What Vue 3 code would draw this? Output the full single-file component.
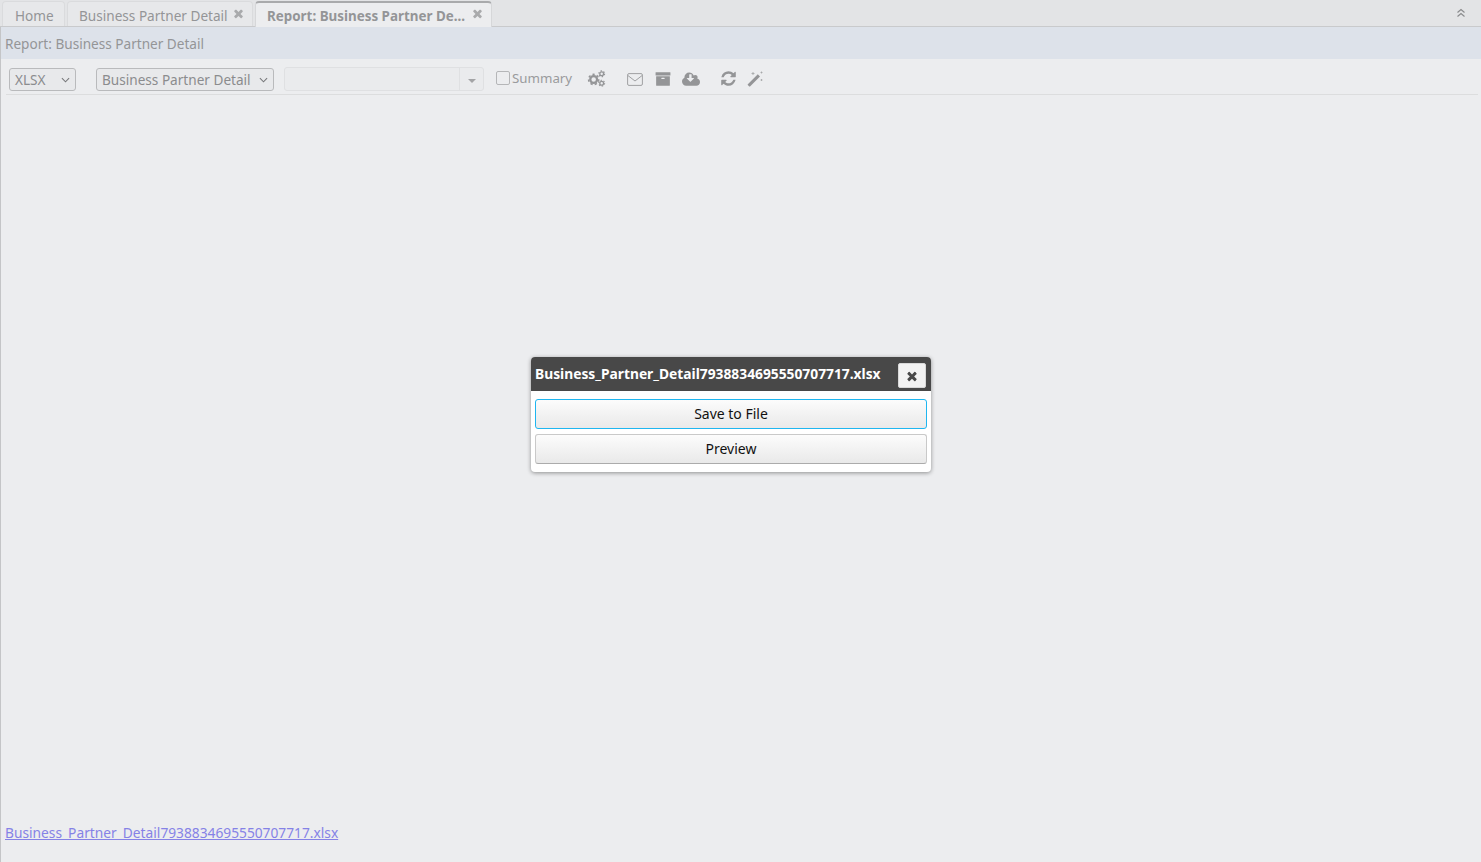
<script setup>
const tabs = [
	{label: 'Home', closable: false},
	{label: 'Business Partner Detail', closable: true},
	{label: 'Report: Business Partner De...', closable: true, active: true},
];
const fileName = 'Business_Partner_Detail7938834695550707717.xlsx';
const closePath = 'M1490 1322q0 40-28 68l-136 136q-28 28-68 28t-68-28l-294-294-294 294q-28 28-68 28t-68-28l-136-136q-28-28-28-68t28-68l294-294-294-294q-28-28-28-68t28-68l136-136q28-28 68-28t68 28l294 294 294-294q28-28 68-28t68 28l136 136q28 28 28 68t-28 68l-294 294 294 294q28 28 28 68z';
</script>

<template>
	<div class="desktop">
		<div class="tabbar">
			<div v-for="tab in tabs" :key="tab.label" class="tab" :class="{active: tab.active, closable: tab.closable}">
				<span class="tab-label">{{ tab.label }}</span>
				<svg v-if="tab.closable" class="tab-close" viewBox="0 0 1792 1792"><path :d="closePath" /></svg>
			</div>
			<svg class="collapse" viewBox="0 0 10 10"><path d="M1.5 4.5 5 1.5l3.5 3M1.5 8.5 5 5.5l3.5 3" /></svg>
		</div>

		<div class="report">
			<div class="title">Report: Business Partner Detail</div>

			<div class="toolbar">
				<div class="select format">
					<span>XLSX</span>
					<svg viewBox="0 0 10 6"><path d="M1 1l4 4 4-4" /></svg>
				</div>
				<div class="select layout">
					<span>Business Partner Detail</span>
					<svg viewBox="0 0 10 6"><path d="M1 1l4 4 4-4" /></svg>
				</div>
				<div class="combo">
					<div class="combo-input"></div>
					<div class="combo-btn"><i></i></div>
				</div>
				<label class="summary"><i class="check"></i>Summary</label>

				<svg class="icon cogs" viewBox="0 0 20 18">
					<circle class="ring" cx="7" cy="10" r="3.6" />
					<circle class="teeth" cx="7" cy="10" r="5.4" />
					<circle class="ring thin" cx="15.5" cy="4" r="2" />
					<circle class="teeth small" cx="15.5" cy="4" r="3.1" />
					<circle class="ring thin" cx="15.5" cy="14" r="2" />
					<circle class="teeth small" cx="15.5" cy="14" r="3.1" />
				</svg>
				<svg class="icon mail" viewBox="0 0 16 13">
					<rect x="0.6" y="0.6" width="14.8" height="11.8" rx="1.4" />
					<path d="M1 2.6 8 8l7-5.4" />
				</svg>
				<svg class="icon archive" viewBox="0 0 1792 1792"><path d="M1088 832q0-26-19-45t-45-19h-256q-26 0-45 19t-19 45 19 45 45 19h256q26 0 45-19t19-45zm576-192v960q0 26-19 45t-45 19h-1408q-26 0-45-19t-19-45v-960q0-26 19-45t45-19h1408q26 0 45 19t19 45zm64-448v256q0 26-19 45t-45 19h-1536q-26 0-45-19t-19-45v-256q0-26 19-45t45-19h1536q26 0 45 19t19 45z" /></svg>
				<svg class="icon cloud" viewBox="0 0 1920 1792"><path d="M1280 864q0-14-9-23t-23-9h-224v-352q0-13-9.5-22.5t-22.5-9.5h-192q-13 0-22.5 9.5t-9.5 22.5v352h-224q-13 0-22.5 9.5t-9.5 22.5q0 14 9 23l352 352q9 9 23 9t23-9l351-351q10-12 10-24zm640 416q0 159-112.5 271.5t-271.5 112.5h-1088q-185 0-316.5-131.5t-131.5-316.5q0-130 70-240t188-165q-2-30-2-43 0-212 150-362t362-150q156 0 285.5 87t188.5 231q71-62 166-62 106 0 181 75t75 181q0 76-41 138 130 31 213.5 135.5t83.5 238.5z" /></svg>
				<svg class="icon refresh" viewBox="0 0 1792 1792"><path d="M1639 1056q0 5-1 7-64 268-268 434.5t-478 166.5q-146 0-282.5-55t-243.5-157l-129 129q-19 19-45 19t-45-19-19-45v-448q0-26 19-45t45-19h448q26 0 45 19t19 45-19 45l-137 137q71 66 161 102t187 36q134 0 250-65t186-179q11-17 53-117 8-23 30-23h192q13 0 22.5 9.5t9.5 22.5zm25-800v448q0 26-19 45t-45 19h-448q-26 0-45-19t-19-45 19-45l138-138q-148-137-349-137-134 0-250 65t-186 179q-11 17-53 117-8 23-30 23h-199q-13 0-22.5-9.5t-9.5-22.5v-7q65-268 270-434.5t480-166.5q146 0 284 55.5t245 156.5l130-129q19-19 45-19t45 19 19 45z" /></svg>
				<svg class="icon magic" viewBox="0 0 16 16">
					<path class="wand" d="M.8 13.2 10.8 3.2l2.2 2.2L3 15.4a.6.6 0 0 1-.8 0L.8 14a.6.6 0 0 1 0-.8z" />
					<path class="spark" d="M6 1v3M4.5 2.5h3M14.5 .5v2M13.5 1.5h2M14.5 8v2M13.5 9h2" />
				</svg>
			</div>

			<div class="content">
				<a class="file-link" href="#">{{ fileName }}</a>
			</div>
		</div>

		<div class="dialog">
			<div class="dialog-head">
				<span>{{ fileName }}</span>
				<button class="dialog-close">
					<svg viewBox="0 0 1792 1792"><path :d="closePath" /></svg>
				</button>
			</div>
			<div class="dialog-body">
				<button class="action focused"><span>Save to File</span></button>
				<button class="action"><span>Preview</span></button>
			</div>
		</div>
	</div>
</template>

<style>
html, body {
	margin: 0;
	background: #ecedef;
}
</style>

<style scoped>
.desktop {
	position: relative;
	display: flex;
	flex-direction: column;
	height: 862px;
	overflow: hidden;
	font-family: "Noto Sans", sans-serif;
	font-size: 13.6px;
	color: #949597;
}

.tabbar {
	display: flex;
	align-items: flex-end;
	gap: 2px;
	flex: none;
	height: 26px;
	padding-left: 2px;
	background: #e3e4e6;
	border-bottom: 1px solid #c9cacc;
	box-sizing: content-box;
}
.tab {
	position: relative;
	box-sizing: border-box;
	display: flex;
	align-items: center;
	width: 63px;
	height: 25px;
	padding: 2px 12px 0;
	background: #e7e8ea;
	border: 1px solid #dadbdd;
	border-bottom: none;
	border-radius: 4px 4px 0 0;
	white-space: nowrap;
}
.tab.closable {
	width: 186px;
	padding-left: 11px;
}
.tab.active {
	width: 237px;
	height: 26px;
	margin-bottom: -1px;
	padding-top: 1px;
	background: #ecedef;
	border-color: #d6d7d9;
	border-top: 2px solid #a9aaac;
	font-weight: 700;
	font-size: 13.4px;
}
.tab-close {
	position: absolute;
	right: 7px;
	top: 5px;
	width: 13px;
	height: 13px;
	fill: #a9aaac;
}
.tab.active .tab-close {
	top: 4px;
}
.collapse {
	width: 10px;
	height: 10px;
	margin: 0 15px 8px auto;
	fill: none;
	stroke: #8a8b8d;
	stroke-width: 1.2;
}

.report {
	flex: 1;
	display: flex;
	flex-direction: column;
	min-height: 0;
	border-left: 1px solid #c4c5c7;
}
.title {
	flex: none;
	height: 32px;
	line-height: 34px;
	padding-left: 4px;
	background: #dde2ea;
}
.toolbar {
	flex: none;
	box-sizing: border-box;
	display: flex;
	align-items: center;
	height: 36px;
	margin: 0 3px 0 5px;
	padding: 4px 0 0 3px;
	border-bottom: 1px solid #dcddde;
}
.select {
	box-sizing: border-box;
	display: flex;
	align-items: center;
	justify-content: space-between;
	height: 23px;
	margin-top: 2px;
	padding: 0 5px;
	background: #e8e9eb;
	border: 1px solid #b9babc;
	border-radius: 3px;
	white-space: nowrap;
	color: #8b8c8e;
}
.select svg {
	flex: none;
	width: 9px;
	height: 6px;
	fill: none;
	stroke: #77787a;
	stroke-width: 1.2;
}
.format {
	width: 67px;
}
.layout {
	width: 178px;
	margin-left: 20px;
}
.combo {
	display: flex;
	box-sizing: border-box;
	width: 200px;
	height: 24px;
	margin-left: 10px;
	border: 1px solid #dfe0e2;
	border-radius: 3px;
	background: #eaebed;
}
.combo-input {
	flex: 1;
}
.combo-btn {
	display: flex;
	align-items: center;
	justify-content: center;
	width: 23px;
	border-left: 1px solid #dfe0e2;
}
.combo-btn i {
	width: 0;
	height: 0;
	margin-top: 4px;
	border: 4px solid transparent;
	border-top-color: #a3a4a6;
	border-bottom: none;
}
.summary {
	display: flex;
	align-items: center;
	margin: -2px 0 0 12px;
	color: #9a9b9d;
	font-size: 13.3px;
}
.check {
	box-sizing: border-box;
	width: 14px;
	height: 14px;
	margin-right: 2px;
	border: 1px solid #b5b6b8;
	border-radius: 2px;
}
.icon {
	flex: none;
	fill: #949597;
}
.cogs {
	width: 19px;
	height: 17px;
	margin-left: 15px;
}
.cogs circle {
	fill: none;
	stroke: #949597;
}
.cogs .ring {
	stroke-width: 2.4;
}
.cogs .ring.thin {
	stroke-width: 1.4;
}
.cogs .teeth {
	stroke-width: 1.6;
	stroke-dasharray: 2.4 2.3;
}
.cogs .teeth.small {
	stroke-width: 1.2;
	stroke-dasharray: 1.5 1.75;
}
.mail {
	width: 16px;
	height: 13px;
	margin: 1px 0 0 21px;
	fill: none;
	stroke: #a0a1a3;
	stroke-width: 1;
}
.archive {
	width: 16px;
	height: 16px;
	margin-left: 12px;
}
.cloud {
	width: 18px;
	height: 17px;
	margin-left: 11px;
}
.refresh {
	width: 17px;
	height: 17px;
	margin-left: 20px;
}
.magic {
	width: 16px;
	height: 16px;
	margin-left: 10px;
}
.magic .spark {
	fill: none;
	stroke: #a3a4a6;
	stroke-width: .8;
}
.content {
	flex: 1;
	display: flex;
	flex-direction: column;
	justify-content: flex-end;
	padding: 0 0 20px 4px;
}
.file-link {
	align-self: flex-start;
	color: #8582e6;
	font-size: 13.75px;
}

.dialog {
	position: absolute;
	left: 531px;
	top: 357px;
	width: 400px;
	height: 115px;
	background: #fff;
	border-radius: 4px;
	box-shadow: 0 1px 4px rgba(0, 0, 0, .4);
	overflow: hidden;
}
.dialog-head {
	box-sizing: border-box;
	display: flex;
	align-items: center;
	justify-content: space-between;
	height: 34px;
	padding: 0 5px 2px 4px;
	background: #484848;
	color: #fff;
	font-weight: 700;
	font-size: 13.8px;
}
.dialog-close {
	display: flex;
	align-items: center;
	justify-content: center;
	width: 28px;
	height: 25px;
	margin-top: 5px;
	padding: 0;
	background: #f2f2f2;
	border: 1px solid #d8d8d8;
	border-radius: 2px;
}
.dialog-close svg {
	width: 14px;
	height: 14px;
	fill: #484848;
}
.dialog-body {
	display: flex;
	flex-direction: column;
	gap: 5px;
	padding: 8px 4px 0;
}
.action {
	height: 30px;
	padding: 0 0 2px;
	font: inherit;
	font-size: 14px;
	color: #111;
	background: linear-gradient(#fcfcfc, #e9e9e9);
	border: 1px solid #c9c9c9;
	border-bottom-color: #ababab;
	border-radius: 3px;
}
.action.focused {
	border-color: #1fb6f0;
}
</style>
